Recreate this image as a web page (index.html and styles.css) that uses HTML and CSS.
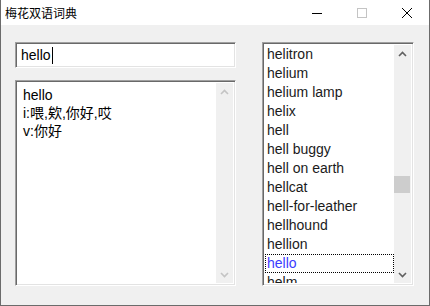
FILE: index.html
```html
<!DOCTYPE html>
<html lang="zh">
<head>
    <meta charset="UTF-8">
    <title>梅花双语词典</title>
    <link rel="stylesheet" href="styles.css">
</head>
<body>
    <div class="window">
        <div class="titlebar">
            <span class="title">梅花双语词典</span>
            <div class="caption-buttons">
                <span class="cap-btn">
                    <svg width="10" height="10" viewBox="0 0 10 10"><path d="M0 5.5H10" stroke="#000" stroke-width="1"/></svg>
                </span>
                <span class="cap-btn">
                    <svg width="10" height="10" viewBox="0 0 10 10"><rect x="0.5" y="0.5" width="9" height="9" fill="none" stroke="#c4c4c4"/></svg>
                </span>
                <span class="cap-btn">
                    <svg width="10" height="10" viewBox="0 0 10 10"><path d="M0 0L10 10M10 0L0 10" stroke="#000" stroke-width="1"/></svg>
                </span>
            </div>
        </div>

        <div class="client">
            <div class="left-col">
                <div class="edit sunken">
                    <span>hello</span><span class="caret"></span>
                </div>
                <div class="memo sunken">
                    <div class="memo-text">
                        <div>hello</div>
                        <div>i:喂,欸,你好,哎</div>
                        <div>v:你好</div>
                    </div>
                    <div class="scrollbar">
                        <span class="arrow disabled">
                            <svg width="9" height="6" viewBox="0 0 9 6"><path d="M1 5L4.5 1.5L8 5" fill="none" stroke="currentColor" stroke-width="1.6"/></svg>
                        </span>
                        <span class="track"></span>
                        <span class="arrow disabled">
                            <svg width="9" height="6" viewBox="0 0 9 6"><path d="M1 1L4.5 4.5L8 1" fill="none" stroke="currentColor" stroke-width="1.6"/></svg>
                        </span>
                    </div>
                </div>
            </div>

            <div class="listbox sunken">
                <ul class="items">
                    <li>helitron</li>
                    <li>helium</li>
                    <li>helium lamp</li>
                    <li>helix</li>
                    <li>hell</li>
                    <li>hell buggy</li>
                    <li>hell on earth</li>
                    <li>hellcat</li>
                    <li>hell-for-leather</li>
                    <li>hellhound</li>
                    <li>hellion</li>
                    <li class="selected">hello</li>
                    <li>helm</li>
                </ul>
                <div class="scrollbar">
                    <span class="arrow">
                        <svg width="9" height="6" viewBox="0 0 9 6"><path d="M1 5L4.5 1.5L8 5" fill="none" stroke="currentColor" stroke-width="1.6"/></svg>
                    </span>
                    <span class="track"><span class="thumb"></span></span>
                    <span class="arrow">
                        <svg width="9" height="6" viewBox="0 0 9 6"><path d="M1 1L4.5 4.5L8 1" fill="none" stroke="currentColor" stroke-width="1.6"/></svg>
                    </span>
                </div>
            </div>
        </div>
    </div>
</body>
</html>
```

FILE: styles.css
```css
html, body {
    margin: 0;
    padding: 0;
}
body {
    width: 430px;
    height: 306px;
    overflow: hidden;
    font-family: "Liberation Sans", "Noto Sans CJK SC", sans-serif;
    background: #f0f0f0;
}
.window {
    width: 430px;
    height: 306px;
    box-sizing: border-box;
    border: 1px solid #6b6b6b;
    border-top: none;
    display: flex;
    flex-direction: column;
}
.titlebar {
    flex: 0 0 25px;
    height: 25px;
    background: #fff;
    display: flex;
    align-items: center;
    justify-content: space-between;
}
.title {
    font-family: "Noto Sans CJK SC", sans-serif;
    font-size: 12px;
    padding-left: 4px;
    color: #000;
}
.caption-buttons {
    display: flex;
    height: 100%;
}
.cap-btn {
    width: 45px;
    display: flex;
    align-items: center;
    justify-content: center;
}
.client {
    flex: 1;
    min-height: 0;
    background: #f0f0f0;
    display: flex;
    gap: 26px;
    padding: 17px 14px 19px 14px;
}
.sunken {
    box-sizing: border-box;
    background: #fff;
    border: 1px solid;
    border-color: #a0a0a0 #fff #fff #a0a0a0;
    box-shadow: inset 1px 1px #696969, inset -1px -1px #e3e3e3;
}
.left-col {
    width: 221px;
    display: flex;
    flex-direction: column;
    gap: 12px;
}
.edit {
    flex: 0 0 26px;
    height: 26px;
    display: flex;
    align-items: center;
    padding-left: 5px;
    font-size: 14px;
    color: #000;
}
.caret {
    width: 1px;
    height: 17px;
    background: #000;
    margin-left: 1px;
}
.memo {
    flex: 1;
    min-height: 0;
    display: flex;
    padding: 2px;
}
.memo-text {
    flex: 1;
    padding: 3px 0 0 5px;
    font-size: 14px;
    line-height: 18px;
    color: #000;
}
.scrollbar {
    width: 17px;
    background: #f0f0f0;
    display: flex;
    flex-direction: column;
}
.arrow {
    height: 17px;
    display: flex;
    align-items: center;
    justify-content: center;
    color: #606060;
}
.arrow.disabled {
    color: #c4c4c4;
}
.track {
    flex: 1;
    position: relative;
}
.thumb {
    position: absolute;
    left: 0;
    width: 16px;
    top: 114px;
    height: 17px;
    background: #cdcdcd;
}
.listbox {
    width: 152px;
    min-height: 0;
    display: flex;
    padding: 2px;
}
.items {
    flex: 1;
    list-style: none;
    margin: 0;
    padding: 0;
    overflow: hidden;
    font-size: 14px;
    color: #1b1b1b;
}
.items li {
    height: 19px;
    line-height: 19px;
    padding-left: 2px;
    box-sizing: border-box;
    white-space: nowrap;
}
.items li.selected {
    color: #3b3bff;
    outline: 1px dotted #000;
    outline-offset: -1px;
}
```
